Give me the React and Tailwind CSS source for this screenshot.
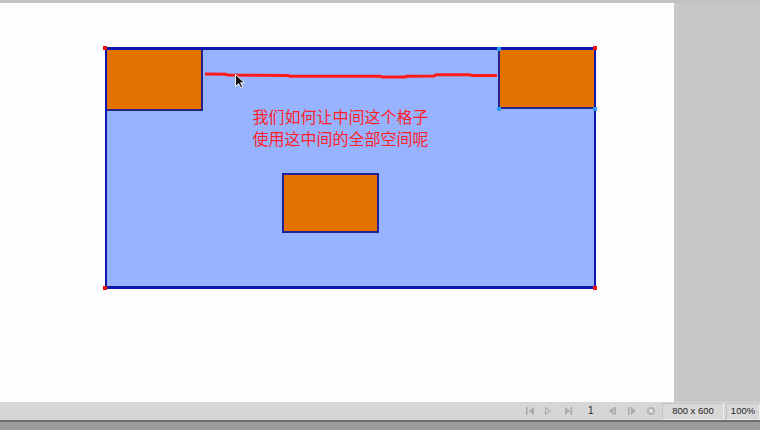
import React from "react";

function NavIcon({ kind }) {
  const c = "#ababab";
  if (kind === "first")
    return (
      <svg width="8" height="8" viewBox="0 0 8 8">
        <rect x="0" y="0" width="1.6" height="8" fill={c} />
        <path d="M8 0 L2.5 4 L8 8 Z" fill={c} />
      </svg>
    );
  if (kind === "play")
    return (
      <svg width="6" height="8" viewBox="0 0 6 8">
        <path d="M0.5 0.5 L5.5 4 L0.5 7.5 Z" fill="#d0d0d0" stroke={c} strokeWidth="1" />
      </svg>
    );
  if (kind === "last")
    return (
      <svg width="7" height="8" viewBox="0 0 7 8">
        <path d="M0 0 L5 4 L0 8 Z" fill={c} />
        <rect x="5.4" y="0" width="1.6" height="8" fill={c} />
      </svg>
    );
  if (kind === "prev")
    return (
      <svg width="7" height="8" viewBox="0 0 7 8">
        <path d="M4.5 0 L0 4 L4.5 8 Z" fill={c} />
        <rect x="5.4" y="0" width="1.6" height="8" fill={c} />
      </svg>
    );
  if (kind === "next")
    return (
      <svg width="8" height="8" viewBox="0 0 8 8">
        <rect x="0" y="0" width="1.6" height="8" fill={c} />
        <path d="M3 0 L8 4 L3 8 Z" fill={c} />
      </svg>
    );
  return (
    <svg width="8" height="8" viewBox="0 0 8 8">
      <circle cx="4" cy="4" r="4" fill="#b4b4b4" />
      <path d="M2.4 2.4 L5.6 5.6 M5.6 2.4 L2.4 5.6" stroke="#f4f4f4" strokeWidth="1.3" />
    </svg>
  );
}

export default function App() {
  const orange = "bg-[#e47200]";
  return (
    <div className="w-[760px] h-[430px] flex flex-col overflow-hidden bg-[#c8c8c8] font-['Liberation_Sans',sans-serif]">
      <div className="h-[3px] bg-[#c2c2c2]" />
      <div className="h-[399px] flex">
        <div className="relative w-[674px] bg-[#fefefe] pl-[105px] pt-[44px]">
          <div className="w-[491px] h-[242px] border-x-2 border-y-[3px] border-[#0d17ae] bg-[#97b3fe] flex flex-col">
            <div className="flex items-start">
              <div className={`w-[96px] h-[61px] ${orange} border-r-2 border-b-2 border-[#25238a]`} />
              <div className="flex-1 pt-[55px] pr-[20px] text-center text-[16px] leading-[22px] text-[#ff1e2a] font-['Noto_Sans_CJK_SC','Noto_Sans',sans-serif]">
                <div>我们如何让中间这个格子</div>
                <div>使用这中间的全部空间呢</div>
              </div>
              <div className={`w-[96px] h-[59px] ${orange} border-l-2 border-b-2 border-[#25238a]`} />
            </div>
            <div className={`mt-[24px] ml-[175px] w-[97px] h-[60px] ${orange} border-2 border-[#20209a]`} />
          </div>

          <svg
            className="absolute left-0 top-0 pointer-events-none"
            width="674"
            height="399"
            viewBox="0 3 674 399"
          >
            <polyline
              points="205,74 226,74.3 228,75 288,75.4 290,76.3 380,76.2 382,77 405,77 407,76.2 434,76 436,74.8 470,74.8 472,75.6 497,75.6"
              fill="none"
              stroke="#ff1a1a"
              strokeWidth="3"
              strokeLinejoin="round"
            />
            <rect x="103" y="46" width="4" height="4" fill="#ee1111" />
            <rect x="103" y="286" width="4" height="4" fill="#ee1111" />
            <rect x="593" y="286" width="4" height="4" fill="#ee1111" />
            <rect x="497" y="47" width="4" height="4" fill="#2e9cff" />
            <rect x="497" y="107" width="4" height="4" fill="#2e9cff" />
            <rect x="593" y="107" width="4" height="4" fill="#2e9cff" />
            <rect x="593" y="46" width="4" height="4" fill="#ee1111" />
            <path
              d="M235.5 74.5 L235.5 86.5 L238.5 83.5 L241 88 L242.8 87.2 L240.6 82.8 L244.5 82.8 Z"
              fill="#111111"
              stroke="#ffffff"
              strokeWidth="0.9"
              strokeLinejoin="round"
            />
          </svg>
        </div>
        <div className="flex-1 bg-[#c8c8c8]" />
      </div>
      <div className="h-[18px] bg-[#d6d6d6] flex items-center justify-end text-[9px] text-[#1e1e1e]">
        <NavIcon kind="first" />
        <div className="ml-[11px]"><NavIcon kind="play" /></div>
        <div className="ml-[14px]"><NavIcon kind="last" /></div>
        <div className="ml-[16px] w-[5px] text-[10px] leading-none">1</div>
        <div className="ml-[16px]"><NavIcon kind="prev" /></div>
        <div className="ml-[12px]"><NavIcon kind="next" /></div>
        <div className="ml-[11px] w-[8px]"><NavIcon kind="close" /></div>
        <div className="ml-[7px] w-[62px] h-[17px] mt-[1px] bg-[#d9d9d9] border border-t-[#c4c4c4] border-l-[#c4c4c4] border-r-[#ececec] border-b-[#ececec] flex items-center justify-center text-[9.5px]">
          800 x 600
        </div>
        <div className="ml-[2px] w-[34px] h-[17px] mt-[1px] bg-[#d9d9d9] border border-t-[#c4c4c4] border-l-[#c4c4c4] border-r-[#ececec] border-b-[#ececec] flex items-center justify-center text-[9.5px]">
          100%
        </div>
      </div>
      <div className="h-[2px] bg-[#707070]" />
      <div className="flex-1 bg-[#9c9c9c]" />
    </div>
  );
}
